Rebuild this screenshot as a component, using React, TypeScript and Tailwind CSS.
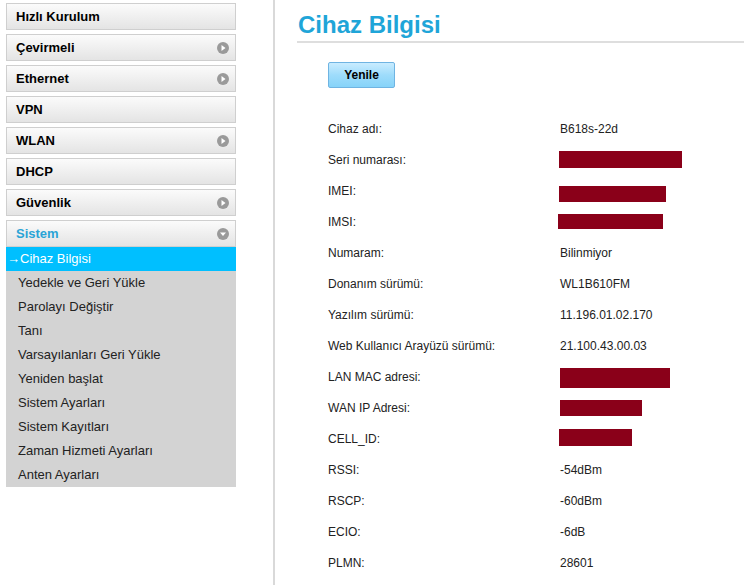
const menu = [
  { label: "Hızlı Kurulum", arrow: false },
  { label: "Çevirmeli", arrow: true },
  { label: "Ethernet", arrow: true },
  { label: "VPN", arrow: false },
  { label: "WLAN", arrow: true },
  { label: "DHCP", arrow: false },
  { label: "Güvenlik", arrow: true },
];

const subItems = [
  "Yedekle ve Geri Yükle",
  "Parolayı Değiştir",
  "Tanı",
  "Varsayılanları Geri Yükle",
  "Yeniden başlat",
  "Sistem Ayarları",
  "Sistem Kayıtları",
  "Zaman Hizmeti Ayarları",
  "Anten Ayarları",
];

// value: string, or a redaction block [width, height, x shift, y shift]
type Row = { label: string; value: string | [number, number, number, number] };
const rows: Row[] = [
  { label: "Cihaz adı:", value: "B618s-22d" },
  { label: "Seri numarası:", value: [123, 17, -1, 0] },
  { label: "IMEI:", value: [107, 16, -1, 3] },
  { label: "IMSI:", value: [105, 15, -2, 0] },
  { label: "Numaram:", value: "Bilinmiyor" },
  { label: "Donanım sürümü:", value: "WL1B610FM" },
  { label: "Yazılım sürümü:", value: "11.196.01.02.170" },
  { label: "Web Kullanıcı Arayüzü sürümü:", value: "21.100.43.00.03" },
  { label: "LAN MAC adresi:", value: [110, 20, 0, 1] },
  { label: "WAN IP Adresi:", value: [82, 16, 0, 0] },
  { label: "CELL_ID:", value: [73, 17, -1, -1] },
  { label: "RSSI:", value: "-54dBm" },
  { label: "RSCP:", value: "-60dBm" },
  { label: "ECIO:", value: "-6dB" },
  { label: "PLMN:", value: "28601" },
];

const Arrow = ({ down }: { down?: boolean }) => (
  <svg width="12" height="12" viewBox="0 0 12 12">
    <circle cx="6" cy="6" r="6" fill="#9a9a9a" />
    {down ? (
      <path d="M3 4.5h6L6 8z" fill="#fff" />
    ) : (
      <path d="M4.5 3v6L8.5 6z" fill="#fff" />
    )}
  </svg>
);

const MenuButton = ({
  label,
  arrow,
  active,
  down,
}: {
  label: string;
  arrow?: boolean;
  active?: boolean;
  down?: boolean;
}) => (
  <div className="h-[27px] flex items-center justify-between pl-[9px] pr-[6px] border border-[#cfcfcf] bg-gradient-to-b from-[#fbfbfb] to-[#e4e4e4]">
    <span
      className={`text-[13px] font-bold ${active ? "text-[#2aa4d6]" : "text-black"}`}
    >
      {label}
    </span>
    {arrow && <Arrow down={down} />}
  </div>
);

export default function App() {
  return (
    <div className="w-[744px] h-[585px] bg-white flex overflow-hidden font-['Liberation_Sans',Arial,sans-serif]">
      <div className="w-[275px] shrink-0 pt-[3px] pl-[6px] border-r-2 border-[#d9d9d9]">
        <div className="w-[230px] flex flex-col gap-[4px]">
          {menu.map((m) => (
            <MenuButton key={m.label} label={m.label} arrow={m.arrow} />
          ))}
          <div className="flex flex-col">
            <MenuButton label="Sistem" arrow active down />
            <div className="bg-[#d3d3d3]">
              <div className="h-[24px] bg-[#00bfff] text-white text-[13px] flex items-center pl-[1px]">
                →Cihaz Bilgisi
              </div>
              {subItems.map((s) => (
                <div
                  key={s}
                  className="h-[24px] flex items-center pl-[12px] text-[13px] text-[#222]"
                >
                  {s}
                </div>
              ))}
            </div>
          </div>
        </div>
      </div>
      <div className="flex-1 pl-[22px] pt-[10px]">
        <h1 className="text-[24px] font-bold text-[#1fa5d8] leading-[30px] pl-[1px] pb-[1px] border-b-2 border-[#dedede]">
          Cihaz Bilgisi
        </h1>
        <div className="pl-[31px] pt-[19px]">
          <button className="w-[67px] h-[26px] rounded-[2px] border border-[#6fb4e2] bg-gradient-to-b from-[#c9ecff] via-[#9edcfb] to-[#86d3f9] text-[12px] font-bold text-black">
            Yenile
          </button>
          <div className="mt-[25px] flex flex-col">
            {rows.map((r) => (
              <div key={r.label} className="h-[31px] flex items-center text-[12px] text-[#222]">
                <span className="w-[232px] shrink-0">{r.label}</span>
                {typeof r.value === "string" ? (
                  <span>{r.value}</span>
                ) : (
                  <span
                    className="block bg-[#8a0019]"
                    style={{
                      width: r.value[0],
                      height: r.value[1],
                      marginLeft: r.value[2],
                      marginTop: r.value[3] * 2,
                    }}
                  />
                )}
              </div>
            ))}
          </div>
        </div>
      </div>
    </div>
  );
}
